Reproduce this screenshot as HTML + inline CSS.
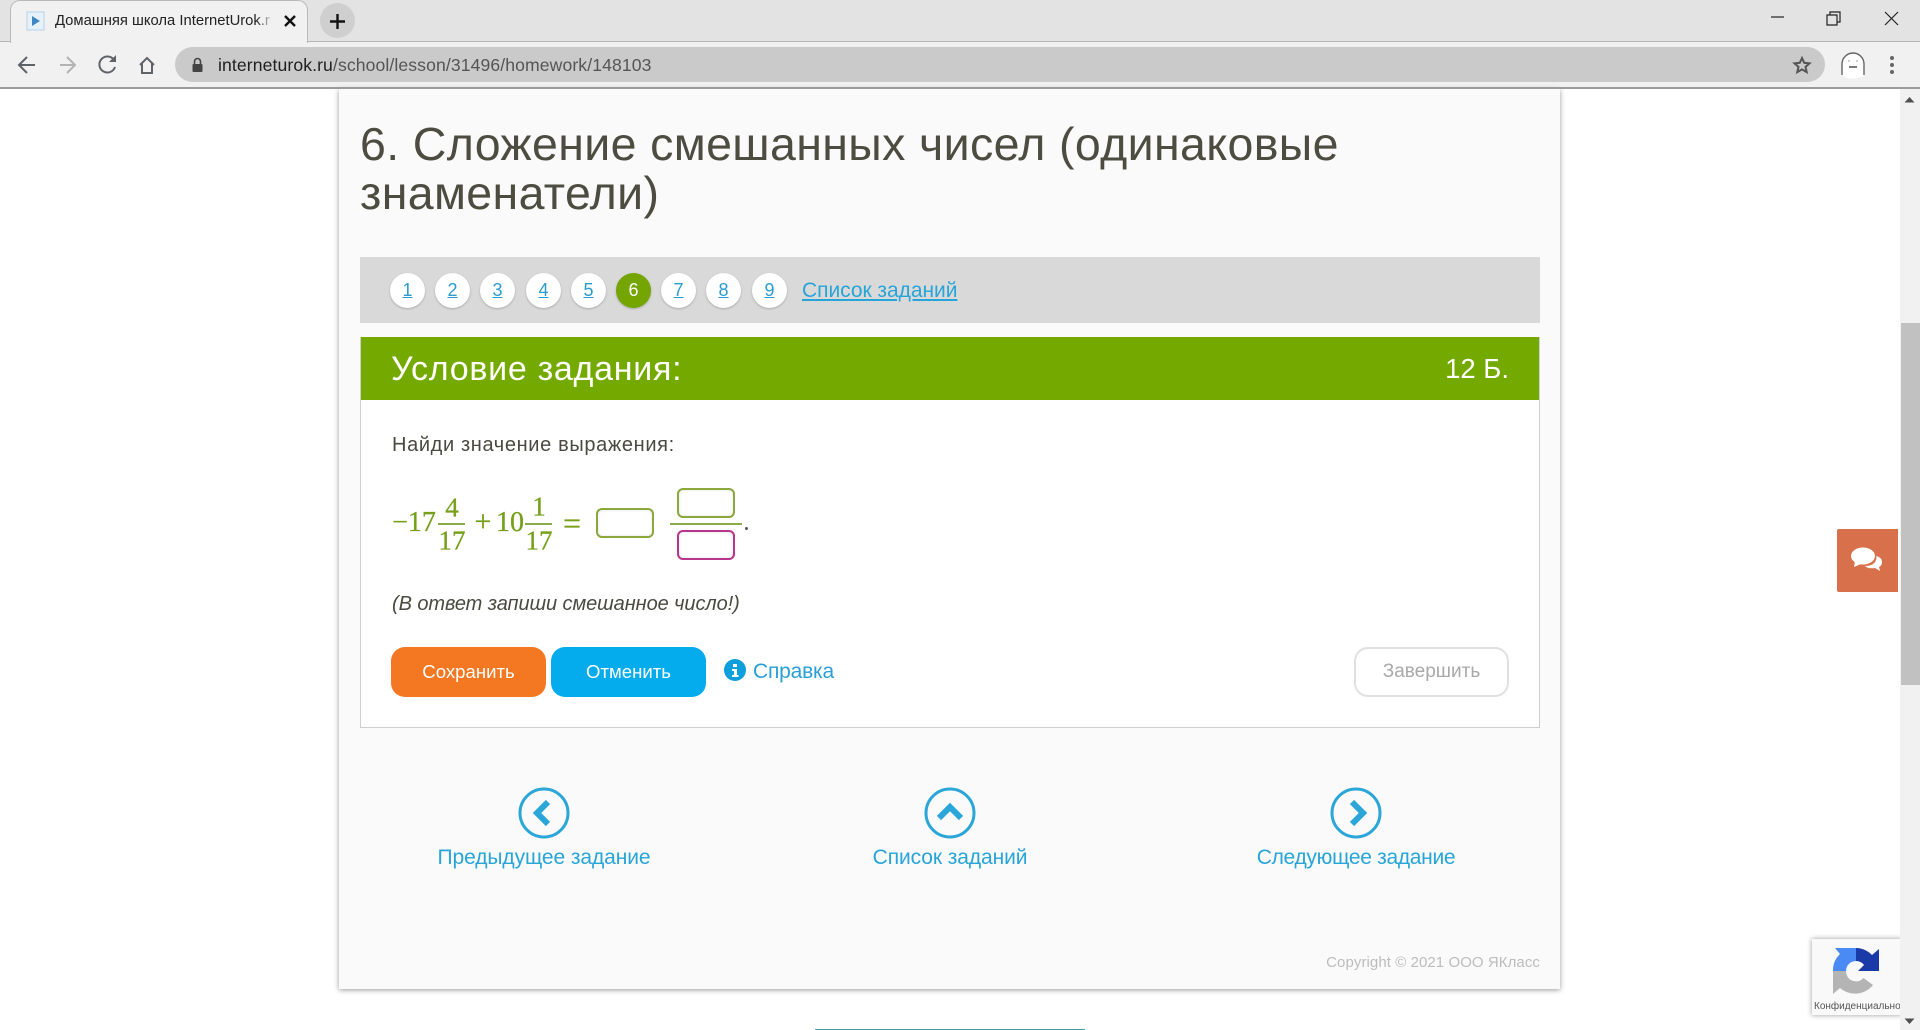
<!DOCTYPE html>
<html lang="ru"><head><meta charset="utf-8"><title>Домашняя школа InternetUrok.ru</title>
<style>
html,body{margin:0;padding:0;width:1920px;height:1030px;overflow:hidden;background:#fff;font-family:"Liberation Sans",sans-serif}
.a,.t,svg.a{position:absolute}
.t{white-space:nowrap;line-height:1}
.c{transform:translateX(-50%)}
.pg{position:absolute;top:273px;width:35px;height:35px;border-radius:50%;background:#fff;box-shadow:0 1px 2px rgba(0,0,0,.22);text-align:center;font-size:18px;line-height:35px;color:#2a9ccf;text-decoration:underline}
.m{position:absolute;white-space:nowrap;line-height:1;font-family:"Liberation Serif",serif;color:#76a01c;font-size:27px;-webkit-text-stroke:.3px #76a01c;transform:translate(-50%,-50%)}
.b{position:absolute;box-sizing:border-box;border-radius:6px;background:#fff;box-shadow:inset 0 0 3px rgba(0,0,0,.12)}
.btn{position:absolute;top:647px;height:50px;width:155px;border-radius:14px;color:#fff;text-align:center;font-size:18.6px;line-height:50px}
.nl{color:#27a5d8;font-size:21px}
</style></head><body>

<!-- browser chrome -->
<div class="a" style="left:0;top:0;width:1920px;height:42px;background:#e3e3e3"></div>
<div class="a" style="left:0;top:41px;width:1920px;height:1px;background:#b5b5b5"></div>
<div class="a" style="left:0;top:42px;width:1920px;height:45px;background:#f1f1f1"></div>
<div class="a" style="left:0;top:87px;width:1920px;height:2px;background:#9b9b9b"></div>
<div class="a" style="left:10px;top:0;width:298px;height:43px;background:#f1f1f1;border:1px solid #b9b9b9;border-bottom:0;border-radius:10px 10px 0 0;box-sizing:border-box"></div>
<svg class="a" style="left:26px;top:10px" width="20" height="22" viewBox="0 0 20 22"><path d="M1 2h17v18H1z" fill="#e6f1fa" stroke="#b5d3ea"/><path d="M6 6l8 5-8 5z" fill="#3f87c4"/></svg>
<div class="t" style="left:55px;top:13px;font-size:14.8px;line-height:16px;color:#222;width:216px;overflow:hidden;height:18px">Домашняя школа InternetUrok.ru</div>
<div class="a" style="left:256px;top:10px;width:18px;height:22px;background:linear-gradient(90deg,rgba(241,241,241,0),#f1f1f1)"></div>
<svg class="a" style="left:283px;top:14px" width="14" height="14" viewBox="0 0 14 14"><path d="M2 2l10 10M12 2L2 12" stroke="#111" stroke-width="2.4"/></svg>
<div class="a" style="left:320px;top:3px;width:35px;height:35px;border-radius:50%;background:#cfcfcf"></div>
<svg class="a" style="left:329px;top:13px" width="17" height="17" viewBox="0 0 17 17"><path d="M8.5 1v15M1 8.5h15" stroke="#111" stroke-width="2.4"/></svg>

<svg class="a" style="left:0;top:42px" width="170" height="46" viewBox="0 0 170 46" fill="none">
<path d="M35 23H20M27 15l-8 8 8 8" stroke="#5f6368" stroke-width="2"/>
<path d="M60 23h14M67 15l8 8-8 8" stroke="#b3b3b3" stroke-width="2"/>
<path d="M114 18a8 8 0 1 0 1 7" stroke="#5f6368" stroke-width="2"/><path d="M116 13v7h-7z" fill="#5f6368"/>
<path d="M140 23l7-7 7 7M142 21v10h10V21" stroke="#5f6368" stroke-width="2"/>
</svg>
<div class="a" style="left:175px;top:47px;width:1650px;height:35px;border-radius:18px;background:#cacaca"></div>
<svg class="a" style="left:191px;top:57px" width="13" height="16" viewBox="0 0 13 16"><path d="M3.5 7V4.5a3 3 0 0 1 6 0V7" fill="none" stroke="#444" stroke-width="1.6"/><rect x="1.5" y="7" width="10" height="8" rx="1" fill="#444"/></svg>
<div class="t" style="left:218px;top:55px;font-size:17.6px;line-height:20px;color:#555;letter-spacing:.1px"><span style="color:#1f1f1f">interneturok.ru</span>/school/lesson/31496/homework/148103</div>
<svg class="a" style="left:1792px;top:55px" width="20" height="20" viewBox="0 0 20 20"><path d="M10 3l2.200 4.800 5.300.6-4 3.500 1.200 5.200L10 14.400l-4.700 2.700 1.200-5.200-4-3.500 5.300-.6z" fill="none" stroke="#555" stroke-width="2"/></svg>
<svg class="a" style="left:1840px;top:50px" width="26" height="30" viewBox="0 0 26 30"><path d="M2 26V14a11 11 0 0 1 22 0v12q-11 5-22 0z" fill="#fff"/><path d="M2 25V14a11 11 0 0 1 22 0v11" fill="none" stroke="#666" stroke-width="1.4"/><path d="M9 17h8" stroke="#444" stroke-width="1.400"/><circle cx="9" cy="11" r=".7" fill="#888"/><circle cx="17" cy="11" r=".7" fill="#888"/></svg>
<svg class="a" style="left:1888px;top:55px" width="8" height="20" viewBox="0 0 8 20" fill="#666"><circle cx="4" cy="3" r="2"/><circle cx="4" cy="10" r="2"/><circle cx="4" cy="17" r="2"/></svg>
<svg class="a" style="left:1770px;top:8px" width="130" height="20" viewBox="0 0 130 20" fill="none" stroke="#222" stroke-width="1.200">
<path d="M1 9h13"/><path d="M57 7h10v10H57zM60 7V4h10v10h-3"/><path d="M115 4l13 13M128 4l-13 13"/></svg>

<!-- page -->
<div class="a" style="left:339px;top:89px;width:1221px;height:900px;background:#fafafa;box-shadow:0 1px 5px rgba(0,0,0,.4)"></div>
<div class="a" style="left:0;top:87px;width:1920px;height:2px;background:#9b9b9b"></div>
<div class="t" style="left:360px;top:120px;font-size:46.5px;line-height:49px;color:#4c4c40;white-space:normal;width:1050px;letter-spacing:.37px">6. Сложение смешанных чисел (одинаковые знаменатели)</div>

<div class="a" style="left:360px;top:257px;width:1180px;height:66px;background:#d9d9d9"></div>
<div class="pg" style="left:390px">1</div><div class="pg" style="left:435px">2</div><div class="pg" style="left:480px">3</div><div class="pg" style="left:526px">4</div><div class="pg" style="left:571px">5</div>
<div class="pg" style="left:616px;background:#74a500;color:#fff;text-decoration:none">6</div>
<div class="pg" style="left:661px">7</div><div class="pg" style="left:706px">8</div><div class="pg" style="left:752px">9</div>
<div class="t" style="left:802px;top:279px;font-size:21px;line-height:24px;color:#27a5d8;text-decoration:underline;letter-spacing:-.04px">Список заданий</div>

<div class="a" style="left:360px;top:337px;width:1180px;height:391px;box-sizing:border-box;background:#fff;border:1px solid #cfcfcf"></div>
<div class="a" style="left:361px;top:337px;width:1178px;height:63px;background:#74a900"></div>
<div class="t" style="left:391px;top:351px;font-size:34px;line-height:37px;color:#fff;letter-spacing:.72px">Условие задания:</div>
<div class="t" style="right:411px;top:352px;font-size:27.5px;line-height:34px;color:#fff">12 Б.</div>

<div class="t" style="left:392px;top:433px;font-size:20px;line-height:24px;color:#4a4a40;letter-spacing:.64px">Найди значение выражения:</div>

<div class="m" style="left:414px;top:523px;font-size:28px">−17</div>
<div class="m" style="left:452px;top:508px">4</div>
<div class="a" style="left:438px;top:523px;width:27px;height:2px;background:#8aac44"></div>
<div class="m" style="left:452px;top:541px">17</div>
<div class="m" style="left:483px;top:522px;font-size:30px">+</div>
<div class="m" style="left:510px;top:523px;font-size:28px">10</div>
<div class="m" style="left:539px;top:507px">1</div>
<div class="a" style="left:525px;top:523px;width:27px;height:2px;background:#8aac44"></div>
<div class="m" style="left:539px;top:541px">17</div>
<div class="m" style="left:572px;top:523px;font-size:32px">=</div>
<div class="b" style="left:596px;top:508px;width:58px;height:30px;border:2px solid #8aa83c"></div>
<div class="b" style="left:677px;top:488px;width:58px;height:30px;border:2px solid #8aa83c"></div>
<div class="a" style="left:670px;top:523px;width:72px;height:2px;background:#8aac44"></div>
<div class="b" style="left:677px;top:530px;width:58px;height:30px;border:2px solid #b8358c"></div>
<div class="a" style="left:745px;top:527px;width:3px;height:3px;border-radius:50%;background:#556"></div>

<div class="t" style="left:392px;top:592px;font-size:20px;line-height:24px;font-style:italic;color:#4a4a40;letter-spacing:-.08px">(В ответ запиши смешанное число!)</div>

<div class="btn" style="left:391px;background:#f47721">Сохранить</div>
<div class="btn" style="left:551px;background:#05aced">Отменить</div>
<svg class="a" style="left:724px;top:659px" width="22" height="22" viewBox="0 0 22 22"><circle cx="11" cy="11" r="11" fill="#0d9fdc"/><path d="M9 5h4v3H9zM8 10h5v6h1.500v2h-6.500v-2H10v-4H8z" fill="#fff"/></svg>
<div class="t" style="left:753px;top:660px;font-size:21px;line-height:24px;color:#2a9fd6;letter-spacing:-.2px">Справка</div>
<div class="a" style="left:1354px;top:647px;width:155px;height:50px;box-sizing:border-box;border:2px solid #e0e0e0;border-radius:14px;background:#fff;color:#a9a9a9;text-align:center;font-size:19px;line-height:46px">Завершить</div>

<svg class="a" style="left:518px;top:787px" width="52" height="52" viewBox="0 0 52 52" fill="none"><circle cx="26" cy="26" r="24" stroke="#2ba6d8" stroke-width="3"/><path d="M30 15L19 26l11 11" stroke="#2ba6d8" stroke-width="6"/></svg>
<svg class="a" style="left:924px;top:787px" width="52" height="52" viewBox="0 0 52 52" fill="none"><circle cx="26" cy="26" r="24" stroke="#2ba6d8" stroke-width="3"/><path d="M15 31l11-11 11 11" stroke="#2ba6d8" stroke-width="6"/></svg>
<svg class="a" style="left:1330px;top:787px" width="52" height="52" viewBox="0 0 52 52" fill="none"><circle cx="26" cy="26" r="24" stroke="#2ba6d8" stroke-width="3"/><path d="M22 15l11 11-11 11" stroke="#2ba6d8" stroke-width="6"/></svg>
<div class="t c nl" style="left:544px;top:846px;line-height:24px;letter-spacing:-.09px">Предыдущее задание</div>
<div class="t c nl" style="left:950px;top:846px;line-height:24px;letter-spacing:-.09px">Список заданий</div>
<div class="t c nl" style="left:1356px;top:846px;line-height:24px;letter-spacing:-.3px">Следующее задание</div>
<div class="t" style="right:380px;top:953px;font-size:15px;line-height:20px;color:#bcbcbc;letter-spacing:.07px">Copyright © 2021 ООО ЯКласс</div>
<div class="a" style="left:815px;top:1029px;width:270px;height:1px;background:#4a93a8"></div>

<!-- chat widget -->
<div class="a" style="left:1837px;top:529px;width:61px;height:63px;background:#d9704c;border-radius:2px 0 0 2px"></div>
<svg class="a" style="left:1851px;top:547px" width="32" height="26" viewBox="0 0 32 26" fill="#fff"><path d="M25 9c4 1 6 3 6 6 0 2-1 4-3 5l1 4-5-3q-7 1-10-2 9 0 11-6 1-2 0-4z"/><ellipse cx="12" cy="9" rx="12" ry="8.500"/><path d="M4 14l-1 6 7-3z"/></svg>

<!-- recaptcha -->
<div class="a" style="left:1812px;top:939px;width:90px;height:76px;background:#f9f9f9;box-shadow:0 0 5px rgba(0,0,0,.4);overflow:hidden">
<svg class="a" style="left:21px;top:9px" width="46" height="46" viewBox="0 0 46 46">
<path d="M0 23A23 23 0 0 1 7 6L2 0H23V13A10 10 0 0 0 13 23Z" fill="#4a8af4"/>
<path d="M23 0A23 23 0 0 1 39 7L46 1V23H25L31 17A10 10 0 0 0 23 13Z" fill="#1a3aa8"/>
<path d="M0 23H13A10 10 0 0 0 30.500 30L40 37A23 23 0 0 1 7 40L0 46Z" fill="#b4b4b4"/>
</svg>
<div class="t" style="left:2px;top:62px;font-size:10px;line-height:12px;color:#555">Конфиденциальность</div>
</div>

<!-- scrollbar -->
<div class="a" style="left:1900px;top:89px;width:20px;height:941px;background:#f1f1f1"></div>
<div class="a" style="left:1901px;top:323px;width:19px;height:362px;background:#c1c1c1"></div>
<svg class="a" style="left:1904px;top:96px" width="11" height="7" viewBox="0 0 11 7"><path d="M.5 6.500L5.500 1l5 5.500z" fill="#505050"/></svg>
<svg class="a" style="left:1904px;top:1018px" width="11" height="7" viewBox="0 0 11 7"><path d="M.5.5L5.500 6l5-5.500z" fill="#505050"/></svg>
</body></html>
